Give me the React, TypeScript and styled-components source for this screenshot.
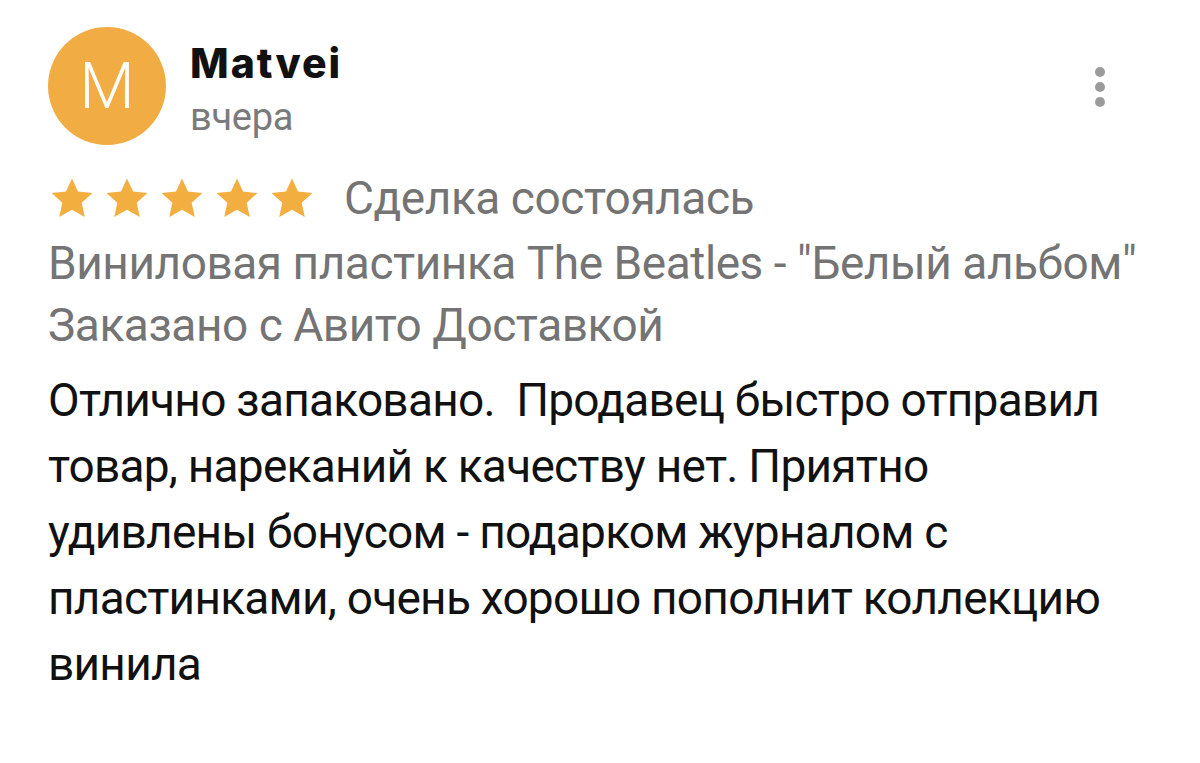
import React from "react";
import styled, { createGlobalStyle } from "styled-components";

const Global = createGlobalStyle`
  html, body { margin: 0; padding: 0; background: #ffffff; }
  body { font-family: Roboto, "Noto Sans", sans-serif; -webkit-font-smoothing: antialiased; }
`;

const Review = styled.article`
  width: 1200px;
  box-sizing: border-box;
  padding: 27px 91px 0 48px;
`;

const Header = styled.header`
  display: flex;
  align-items: flex-start;
`;

const Avatar = styled.div`
  width: 118px;
  height: 118px;
  border-radius: 50%;
  background: #f1ac43;
  color: #ffffff;
  display: flex;
  align-items: center;
  justify-content: center;
  font-family: Roboto, sans-serif;
  font-weight: 300;
  font-size: 64px;
  flex-shrink: 0;
`;

const Meta = styled.div`
  display: flex;
  flex-direction: column;
  margin-left: 24px;
  padding-top: 10px;
  flex: 1;
`;

const Name = styled.div`
  font-family: Inter, sans-serif;
  font-weight: 800;
  font-size: 41px;
  line-height: 52px;
  color: #111111;
  letter-spacing: 2px;
`;

const DateText = styled.div`
  font-family: Roboto, sans-serif;
  font-size: 38px;
  line-height: 44px;
  margin-top: 6px;
  color: #7a7a7a;
  letter-spacing: -0.3px;
`;

const MenuButton = styled.div`
  display: flex;
  flex-direction: column;
  gap: 5px;
  margin-top: 40px;
  padding: 0 4px;
`;

const Dot = styled.span`
  width: 10px;
  height: 10px;
  border-radius: 50%;
  background: #9b9b9b;
`;

const RatingRow = styled.div`
  display: flex;
  align-items: center;
  margin-top: 22px;
`;

const Stars = styled.div`
  display: flex;
  gap: 11px;
  margin-left: 2px;
  margin-right: 30px;
`;

const GrayLine = styled.div`
  font-family: Roboto, sans-serif;
  font-size: 46px;
  line-height: 62px;
  color: #747474;
  letter-spacing: -0.45px;
  white-space: nowrap;
`;

const Details = styled.div`
  margin-top: 3px;
`;

const Body = styled.p`
  margin: 11px 0 0;
  font-family: Roboto, sans-serif;
  font-size: 46px;
  line-height: 66px;
  color: #111111;
  letter-spacing: -0.75px;
  width: 1080px;
`;

const Star = () => (
  <svg width="44" height="42" viewBox="0 0 24 23">
    <path
      d="M12 0.8l3.3 7.2 7.9 0.8-5.9 5.3 1.7 7.8L12 17.9l-7 4 1.7-7.8L0.8 8.8l7.9-0.8z"
      fill="#f2ae3f"
    />
  </svg>
);

export default function App() {
  return (
    <>
      <Global />
      <Review>
        <Header>
          <Avatar>M</Avatar>
          <Meta>
            <Name>Matvei</Name>
            <DateText>вчера</DateText>
          </Meta>
          <MenuButton>
            <Dot />
            <Dot />
            <Dot />
          </MenuButton>
        </Header>
        <RatingRow>
          <Stars>
            <Star />
            <Star />
            <Star />
            <Star />
            <Star />
          </Stars>
          <GrayLine>Сделка состоялась</GrayLine>
        </RatingRow>
        <Details>
          <GrayLine>Виниловая пластинка The Beatles - "Белый альбом"</GrayLine>
          <GrayLine>Заказано с Авито Доставкой</GrayLine>
        </Details>
        <Body>
          Отлично запаковано.&nbsp; Продавец быстро отправил товар, нареканий к качеству нет. Приятно
          удивлены бонусом - подарком журналом с пластинками, очень хорошо пополнит коллекцию винила
        </Body>
      </Review>
    </>
  );
}
